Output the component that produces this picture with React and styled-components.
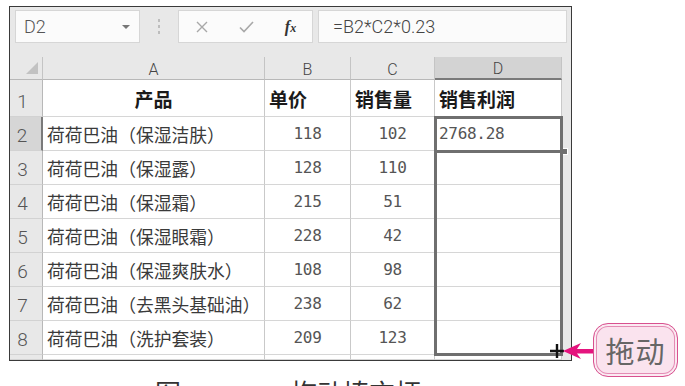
import React from "react";
import styled, { createGlobalStyle } from "styled-components";

const GlobalStyle = createGlobalStyle`
    html, body {
        margin: 0;
        background: #fff;
        overflow: hidden;
    }
    body {
        font-family: "Noto Sans CJK SC", sans-serif;
    }
`;

const Page = styled.div`
    position: relative;
    width: 685px;
    height: 386px;
    padding: 6px 0 0 9px;
    box-sizing: border-box;
    overflow: hidden;
`;

const Frame = styled.div`
    width: 563px;
    height: 355px;
    box-sizing: border-box;
    border: 1px solid #3a3a3a;
    background: #e8e8e8;
    display: flex;
    flex-direction: column;
`;

const FormulaBar = styled.div`
    display: flex;
    align-items: center;
    height: 33px;
    margin: 3px 0 14px 5px;
`;

const Box = styled.div`
    height: 33px;
    box-sizing: border-box;
    background: #fbfbfb;
    border: 1px solid #d6d6d6;
    display: flex;
    align-items: center;
    width: ${props => props.w}px;
    margin-left: ${props => props.ml || 0}px;
    padding-left: ${props => props.pl || 0}px;
`;

const NameText = styled.span`
    font-family: Roboto, "Liberation Sans", sans-serif;
    font-weight: 300;
    font-size: 18px;
    color: #555;
    flex: 1;
`;

const Caret = styled.span`
    width: 0;
    height: 0;
    border-left: 4px solid transparent;
    border-right: 4px solid transparent;
    border-top: 4px solid #777;
    margin-right: 9px;
`;

const Dots = styled.div`
    width: 3px;
    margin-left: 18px;
    display: flex;
    flex-direction: column;
    gap: 3px;
    span {
        width: 2px;
        height: 3px;
        background: #bdbdbd;
    }
`;

const IconSlot = styled.div`
    width: ${props => props.w}px;
    display: flex;
    justify-content: center;
    align-items: center;
`;

const Fx = styled.span`
    font-family: "Liberation Serif", serif;
    font-style: italic;
    font-weight: bold;
    font-size: 16px;
    color: #333;
    small {
        font-size: 12px;
    }
`;

const FormulaText = styled.span`
    font-family: Roboto, "Liberation Sans", sans-serif;
    font-weight: 300;
    font-size: 18px;
    color: #444;
`;

const Stack = styled.div`
    flex: 1;
    display: grid;
    grid-template-columns: 1fr;
    grid-template-rows: 1fr;
    & > * {
        grid-area: 1 / 1;
    }
`;

const Sheet = styled.div`
    display: grid;
    grid-template-columns: 33px 222px 86px 84px 127px 1fr;
    grid-template-rows: 23px 37px repeat(7, 34px) 1fr;
`;

const Overlay = styled(Sheet)`
    pointer-events: none;
`;

const Corner = styled.div`
    border-right: 1px solid #c4c4c4;
    border-bottom: 1px solid #b8b8b8;
    display: flex;
    align-items: flex-end;
    justify-content: flex-end;
    padding: 0 4px 5px 0;
    box-sizing: border-box;
`;

const Triangle = styled.div`
    width: 0;
    height: 0;
    border-left: 12px solid transparent;
    border-bottom: 12px solid #c2c2c2;
`;

const ColHead = styled.div`
    box-sizing: border-box;
    background: ${props => (props.active ? "#d3d3d3" : "#e8e8e8")};
    border-right: 1px solid #c4c4c4;
    border-bottom: ${props => (props.active ? "2px solid #7a7a7a" : "1px solid #b8b8b8")};
    display: flex;
    align-items: center;
    justify-content: center;
    font-family: Roboto, "Liberation Sans", sans-serif;
    font-weight: 300;
    font-size: 16px;
    color: #444;
    padding-top: 2px;
`;

const RowHead = styled.div`
    box-sizing: border-box;
    background: ${props => (props.active ? "#d6d6d6" : "#e8e8e8")};
    border-right: ${props => (props.active ? "2px solid #7a7a7a" : "1px solid #b8b8b8")};
    border-bottom: 1px solid #d2d2d2;
    display: flex;
    align-items: flex-end;
    justify-content: center;
    padding: 0 7px 1px 0;
    font-family: Roboto, "Liberation Sans", sans-serif;
    font-weight: 300;
    font-size: 19px;
    line-height: 26px;
    color: #555;
`;

const Cell = styled.div`
    box-sizing: border-box;
    background: #fff;
    border-right: 1px solid #c9c9c9;
    border-bottom: 1px solid #d6d6d6;
    display: flex;
    align-items: center;
    justify-content: ${props => props.align || "flex-start"};
    padding-left: ${props => (props.align === "center" ? 0 : 4)}px;
    color: #2b2b2b;
    white-space: nowrap;
    overflow: visible;
`;

const Bold = styled.span`
    font-weight: bold;
    font-size: 19px;
    color: #1a1a1a;
`;

const Text = styled.span`
    font-size: 17.8px;
    color: #3a3a3a;
`;

const Num = styled.span`
    font-family: "DejaVu Sans Mono", monospace;
    font-size: 16px;
    color: #555;
    letter-spacing: -0.3px;
`;

const Filler = styled.div`
    background: #e8e8e8;
`;

const DragOutline = styled.div`
    grid-column: 5 / 6;
    grid-row: 3 / 10;
    margin: -1px;
    border: 3px solid #6f6f6f;
    position: relative;
`;

const ActiveCell = styled.div`
    grid-column: 5 / 6;
    grid-row: 3 / 4;
    margin: 0 -1px -2px 0;
    border-bottom: 3px solid #6f6f6f;
    position: relative;
`;

const Handle = styled.span`
    position: absolute;
    right: -5px;
    bottom: -5px;
    width: 5px;
    height: 5px;
    background: #6f6f6f;
    border: 1px solid #fff;
`;

const Cursor = styled.svg`
    position: absolute;
    right: -4px;
    bottom: -5px;
`;

const Arrow = styled.svg`
    position: absolute;
    left: 561px;
    top: 341px;
`;

const Callout = styled.div`
    position: absolute;
    left: 593px;
    top: 323px;
    width: 85px;
    height: 54px;
    box-sizing: border-box;
    border: 1.5px solid #d8518f;
    border-radius: 15px;
    background: #fae3ee;
    box-shadow: inset 0 0 0 2px #fbeaf2, inset 0 0 0 3px #e48bb4;
    display: flex;
    align-items: center;
    justify-content: center;
    font-size: 29px;
    color: #666;
    letter-spacing: 1px;
`;

const Caption = styled.div`
    margin-top: 18px;
    padding-left: 146px;
    font-size: 26px;
    line-height: 26px;
    color: #333;
    white-space: nowrap;
    span {
        margin-left: 110px;
    }
`;

const rows = [
    ["荷荷巴油（保湿洁肤）", 118, 102, "2768.28"],
    ["荷荷巴油（保湿露）", 128, 110, ""],
    ["荷荷巴油（保湿霜）", 215, 51, ""],
    ["荷荷巴油（保湿眼霜）", 228, 42, ""],
    ["荷荷巴油（保湿爽肤水）", 108, 98, ""],
    ["荷荷巴油（去黑头基础油）", 238, 62, ""],
    ["荷荷巴油（洗护套装）", 209, 123, ""],
];

const App = () => (
    <Page>
        <GlobalStyle />
        <Frame>
            <FormulaBar>
                <Box w={125} pl={8}>
                    <NameText>D2</NameText>
                    <Caret />
                </Box>
                <Dots><span /><span /><span /></Dots>
                <Box w={135} ml={17}>
                    <IconSlot w={45}>
                        <svg width="12" height="12" viewBox="0 0 12 12">
                            <path d="M1 1 L11 11 M11 1 L1 11" stroke="#a8a8a8" strokeWidth="1.4" />
                        </svg>
                    </IconSlot>
                    <IconSlot w={45}>
                        <svg width="15" height="12" viewBox="0 0 15 12">
                            <path d="M1 6.5 L5 10.5 L14 1" stroke="#a8a8a8" strokeWidth="1.6" fill="none" />
                        </svg>
                    </IconSlot>
                    <IconSlot w={43}>
                        <Fx>f<small>x</small></Fx>
                    </IconSlot>
                </Box>
                <Box w={249} ml={5} pl={14}>
                    <FormulaText>=B2*C2*0.23</FormulaText>
                </Box>
            </FormulaBar>
            <Stack>
                <Sheet>
                    <Corner><Triangle /></Corner>
                    <ColHead>A</ColHead>
                    <ColHead>B</ColHead>
                    <ColHead>C</ColHead>
                    <ColHead active>D</ColHead>
                    <Filler />

                    <RowHead>1</RowHead>
                    <Cell align="center"><Bold>产品</Bold></Cell>
                    <Cell><Bold>单价</Bold></Cell>
                    <Cell><Bold>销售量</Bold></Cell>
                    <Cell><Bold>销售利润</Bold></Cell>
                    <Filler />

                    {rows.map((r, i) => (
                        <React.Fragment key={i}>
                            <RowHead active={i === 0}>{i + 2}</RowHead>
                            <Cell><Text>{r[0]}</Text></Cell>
                            <Cell align="center"><Num>{r[1]}</Num></Cell>
                            <Cell align="center"><Num>{r[2]}</Num></Cell>
                            <Cell><Num>{r[3]}</Num></Cell>
                            <Filler />
                        </React.Fragment>
                    ))}

                    <RowHead />
                    <Cell />
                    <Cell />
                    <Cell />
                    <Cell />
                    <Filler />
                </Sheet>
                <Overlay>
                    <ActiveCell><Handle /></ActiveCell>
                    <DragOutline>
                        <Cursor width="14" height="14" viewBox="0 0 14 14">
                            <path d="M7 0 V14 M0 7 H14" stroke="#111" strokeWidth="2.4" />
                        </Cursor>
                    </DragOutline>
                </Overlay>
            </Stack>
        </Frame>
        <Arrow width="36" height="20" viewBox="0 0 36 20">
            <path d="M2 10 L20 2 L16 8 L34 8 L34 12.5 L16 12.5 L20 18 Z" fill="#e5147e" />
        </Arrow>
        <Callout>拖动</Callout>
        <Caption>图<span>拖动填充柄</span></Caption>
    </Page>
);

export default App;
